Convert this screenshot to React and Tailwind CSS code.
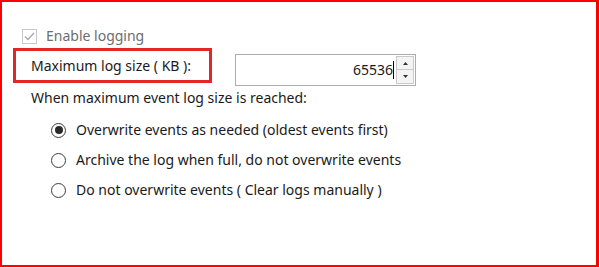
import React from "react";

function Radio({ checked, label }) {
  return (
    <div className="flex items-center h-[30px]">
      <div className="w-[15px] h-[15px] rounded-full border border-[#3c3c3c] bg-white flex items-center justify-center">
        {checked && <div className="w-[8px] h-[8px] rounded-full bg-[#2a2a2a]" />}
      </div>
      <span className="ml-[10px] text-[14px] text-[#1a1a1a]">{label}</span>
    </div>
  );
}

export default function App() {
  return (
    <div className="w-[599px] h-[267px] bg-white border-t-2 border-l-2 border-b-2 border-r-[3px] border-[#ff0000] font-['Noto_Sans',sans-serif] leading-none overflow-hidden">
      <div className="flex flex-col">
        {/* Enable logging */}
        <div className="flex items-center h-[16px] mt-[26px] pl-[20px]">
          <div className="w-[15px] h-[15px] border border-[#c8c8c8] bg-white flex items-center justify-center">
            <svg width="13" height="13" viewBox="0 0 13 13">
              <path d="M2 6.5 L5 9.5 L11 3" fill="none" stroke="#a8a8a8" strokeWidth="1.3" />
            </svg>
          </div>
          <span className="ml-[9px] text-[14px] text-[#6d6d6d]">Enable logging</span>
        </div>

        {/* Max log size row */}
        <div className="flex items-start mt-[4px] h-[38px]">
          <div className="ml-[11px] w-[199px] h-[35px] border-[3px] border-[#e3262a] flex items-center pl-[15px]">
            <span className="text-[14px] text-[#1a1a1a]">Maximum log size ( KB ):</span>
          </div>
          <div className="ml-[23px] mt-[6px] w-[181px] h-[32px] border border-[#acacac] bg-white flex items-center">
            <div className="flex-1 flex justify-end items-center pr-[2px]">
              <span className="text-[14px] text-[#1a1a1a]">65536</span>
              <div className="w-[1px] h-[18px] bg-black" />
            </div>
            <div className="flex flex-col w-[18px] h-[28px] mr-[1px]">
              <div className="h-[14px] border border-[#c9c9c9] bg-[#f4f4f4] flex items-center justify-center">
                <svg width="5" height="3" viewBox="0 0 5 3"><path d="M0 3 L2.5 0 L5 3 Z" fill="#333" /></svg>
              </div>
              <div className="h-[14px] border border-t-0 border-[#c9c9c9] bg-[#f4f4f4] flex items-center justify-center">
                <svg width="5" height="3" viewBox="0 0 5 3"><path d="M0 0 L2.5 3 L5 0 Z" fill="#333" /></svg>
              </div>
            </div>
          </div>
        </div>

        <div className="pl-[29px] mt-[3px] h-[18px] flex items-center">
          <span className="text-[14px] text-[#1a1a1a]">When maximum event log size is reached:</span>
        </div>

        <div className="pl-[49px] mt-[8px] flex flex-col">
          <Radio checked label="Overwrite events as needed (oldest events first)" />
          <Radio label="Archive the log when full, do not overwrite events" />
          <Radio label="Do not overwrite events ( Clear logs manually )" />
        </div>
      </div>
    </div>
  );
}
